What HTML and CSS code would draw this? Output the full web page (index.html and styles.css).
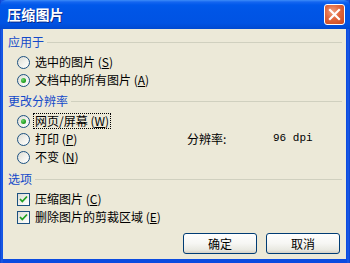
FILE: index.html
```html
<!DOCTYPE html>
<html lang="zh-CN">
<head>
<meta charset="utf-8">
<title>压缩图片</title>
<link rel="stylesheet" href="styles.css">
</head>
<body>
<div class="window">
  <div class="titlebar">
    <span class="title">压缩图片</span>
    <div class="close">
      <svg width="21" height="21" viewBox="0 0 21 21"><path d="M6 6 L15 15 M15 6 L6 15" stroke="#fff" stroke-width="2.2" stroke-linecap="square"/></svg>
    </div>
  </div>
  <div class="body">
    <section class="group g1">
      <div class="legend"><span class="legend-text">应用于</span><span class="rule"></span></div>
      <div class="opt"><span class="radio"></span><span class="lbl">选中的图片 (<u>S</u>)</span></div>
      <div class="opt"><span class="radio on"></span><span class="lbl">文档中的所有图片 (<u>A</u>)</span></div>
    </section>
    <section class="group g2">
      <div class="legend"><span class="legend-text">更改分辨率</span><span class="rule"></span></div>
      <div class="res-grid">
        <div class="opt"><span class="radio on"></span><span class="lbl focus">网页/屏幕 (<u>W</u>)</span></div>
        <div class="opt"><span class="radio"></span><span class="lbl">打印 (<u>P</u>)</span></div>
        <div class="res-label">分辨率:</div>
        <div class="res-value">96 dpi</div>
        <div class="opt"><span class="radio"></span><span class="lbl">不变 (<u>N</u>)</span></div>
      </div>
    </section>
    <section class="group g3">
      <div class="legend"><span class="legend-text">选项</span><span class="rule"></span></div>
      <div class="opt"><span class="check"><svg width="13" height="13" viewBox="0 0 13 13"><path d="M3 6 L5.3 8.5 L10 3.5" fill="none" stroke="#21a121" stroke-width="1.8"/></svg></span><span class="lbl">压缩图片 (<u>C</u>)</span></div>
      <div class="opt"><span class="check"><svg width="13" height="13" viewBox="0 0 13 13"><path d="M3 6 L5.3 8.5 L10 3.5" fill="none" stroke="#21a121" stroke-width="1.8"/></svg></span><span class="lbl">删除图片的剪裁区域 (<u>E</u>)</span></div>
    </section>
    <div class="buttons">
      <button class="btn">确定</button>
      <button class="btn">取消</button>
    </div>
  </div>
</div>
</body>
</html>
```
FILE: styles.css
```css
* { box-sizing: border-box; }
html, body { margin: 0; padding: 0; }
body {
  width: 350px;
  height: 263px;
  overflow: hidden;
  font-family: "Noto Sans CJK SC", "Liberation Sans", sans-serif;
  font-size: 12px;
  color: #000;
  background: #0847d8;
}
.window {
  width: 350px;
  height: 263px;
  display: flex;
  flex-direction: column;
  background: linear-gradient(90deg, #0a3fcf 0, #1c5fe8 2px, #0b4be0 3px, #0b4be0 347px, #1c5fe8 348px, #0a3fcf 350px);
}
.titlebar {
  height: 29px;
  flex: none;
  display: flex;
  align-items: center;
  justify-content: space-between;
  padding: 0 5px 0 7px;
  background: linear-gradient(#3d8cf8 0, #1566f0 2px, #0058ea 5px, #0055e6 40%, #0053e3 80%, #0049d0 100%);
  border-radius: 6px 6px 0 0;
}
.title {
  color: #fff;
  font-weight: bold;
  font-size: 14px;
  letter-spacing: 0.2px;
  text-shadow: 1px 1px 0 #0a2a8a;
  line-height: 16px;
  margin-top: -1px;
}
.close {
  width: 21px;
  height: 21px;
  border: 1px solid #fff;
  border-radius: 3px;
  background: radial-gradient(circle at 40% 35%, #f0a080 0, #e0663c 45%, #c8461c 100%);
  display: flex;
  align-items: center;
  justify-content: center;
  margin-top: -1px;
}
.close svg { display: block; margin: -1px; }
.body {
  flex: 1;
  margin: 0 4px 4px 3px;
  background: #ece9d8;
  padding: 2px 4px 0 5px;
  display: flex;
  flex-direction: column;
}
.legend {
  height: 22px;
  display: flex;
  align-items: center;
}
.legend-text {
  color: #1449c9;
  line-height: 14px;
}
.rule {
  flex: 1;
  height: 1px;
  background: #d0d0bf;
  margin-left: 3px;
  margin-top: 1px;
}
.g2 { margin-top: 1px; }
.g3 { margin-top: 2px; }
.opt {
  height: 18px;
  display: flex;
  align-items: center;
  padding-left: 9px;
}
.lbl {
  margin-left: 3px;
  line-height: 14px;
  padding: 0 1px;
  border: 1px dotted transparent;
}
.lbl.focus { border-color: #000; }
.radio {
  width: 13px;
  height: 13px;
  border: 1px solid #1c5180;
  border-radius: 50%;
  background: linear-gradient(135deg, #dcdcd4 0, #f4f4f0 60%, #fff 100%);
  position: relative;
  flex: none;
}
.radio.on::after {
  content: "";
  position: absolute;
  left: 3px;
  top: 3px;
  width: 5px;
  height: 5px;
  border-radius: 50%;
  background: radial-gradient(circle at 35% 35%, #6fd46f 0, #21a121 60%, #1a8a1a 100%);
}
.check {
  width: 13px;
  height: 13px;
  border: 1px solid #1c5180;
  background: linear-gradient(135deg, #dcdcd4 0, #f4f4f0 60%, #fff 100%);
  flex: none;
  display: flex;
}
.check svg { display: block; margin: -1px; }
.res-grid {
  display: grid;
  grid-template-columns: 179px 86px auto;
  grid-template-rows: 18px 18px 18px;
}
.res-grid .opt:nth-child(1) { grid-column: 1 / 4; grid-row: 1; }
.res-grid .opt:nth-child(2) { grid-column: 1; grid-row: 2; }
.res-grid .opt:nth-child(5) { grid-column: 1; grid-row: 3; }
.res-label {
  grid-column: 2;
  grid-row: 2;
  display: flex;
  align-items: center;
  margin-top: -2px;
}
.res-value {
  grid-column: 3;
  grid-row: 2;
  display: flex;
  align-items: center;
  margin-top: -2px;
  font-family: "Liberation Mono", monospace;
  font-size: 11px;
}
.buttons {
  margin-top: auto;
  display: flex;
  justify-content: flex-end;
  gap: 9px;
  padding: 0 2px 5px 0;
}
.btn {
  width: 74px;
  height: 21px;
  border: 1px solid #003c74;
  border-radius: 3px;
  background: linear-gradient(#ffffff 0, #f6f6f3 50%, #e8e8e0 85%, #d6d0c5 100%);
  font-family: "Noto Sans CJK SC", sans-serif;
  font-size: 12px;
  line-height: 14px;
  padding: 0;
  color: #000;
}
```
